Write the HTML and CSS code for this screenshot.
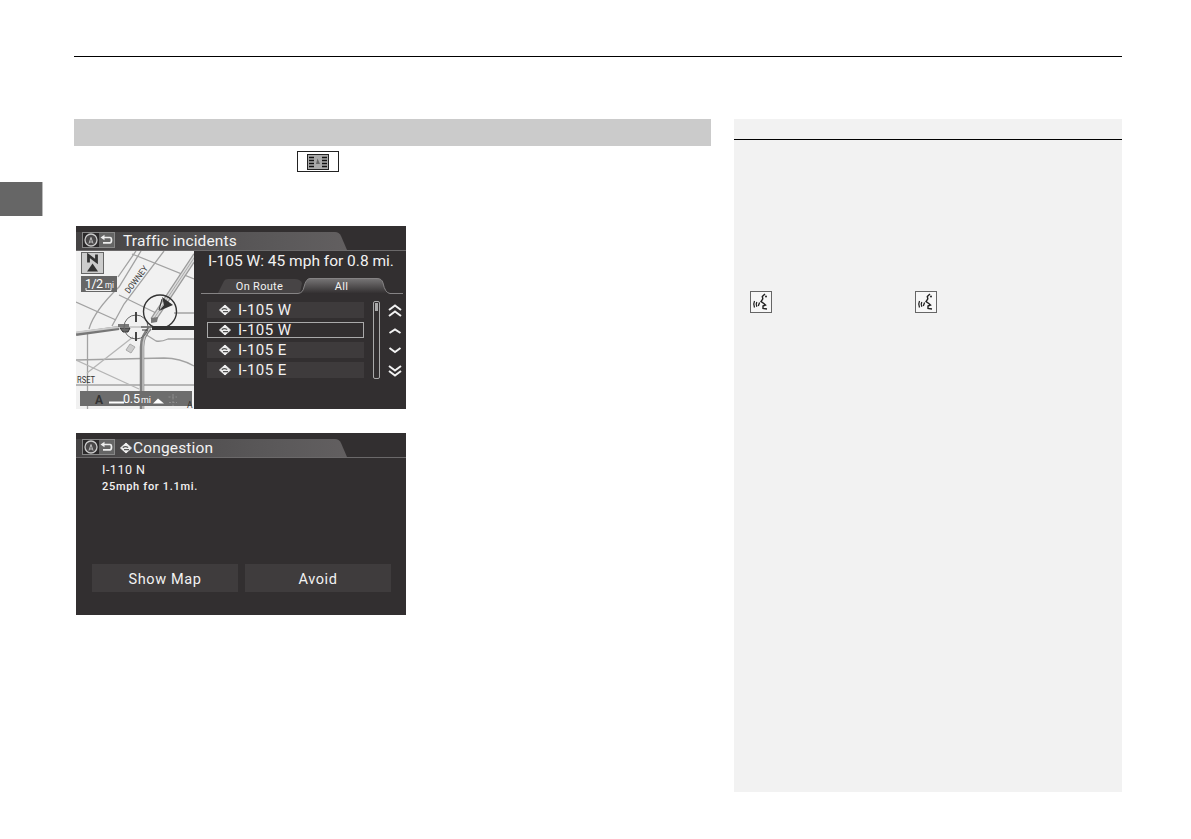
FILE: index.html
```html
<!DOCTYPE html>
<html lang="en">
<head>
    <meta charset="UTF-8">
    <meta name="viewport" content="width=device-width, initial-scale=1.0">
    <title>Traffic incidents</title>
    <link rel="stylesheet" href="styles.css">
</head>
<body>
    <!-- shared icons -->
    <svg class="defs" width="0" height="0">
        <symbol id="back" viewBox="0 0 33 16">
            <rect x="0.5" y="0.5" width="32" height="15" fill="#656565" stroke="#888"/>
            <rect x="1" y="1" width="16" height="14" fill="#2b292a"/>
            <circle cx="9" cy="8" r="6" fill="#4a4849" stroke="#ccc" stroke-width="1.3"/>
            <path d="M9 5.5 L7 11.5 M9 5.5 L11 11.5 M8 10 H10" stroke="#ccc" stroke-width="0.9" fill="none"/>
            <path d="M21 5.5 H28 Q29.500 5.500 29.500 8 Q29.500 10.800 28 10.800 H21" stroke="#eee" stroke-width="1.7" fill="none"/>
            <path d="M22.500 2.800 L18.500 5.500 L22.500 8.200 Z" fill="#eee"/>
        </symbol>
        <symbol id="sign" viewBox="0 0 12 12">
            <path d="M6 1 L11.500 6 L6 11 L0.500 6 Z" fill="#eee" stroke="#eee" stroke-linejoin="round"/>
            <path d="M2.800 5.800 Q5 3.800 8.200 5.500 M4 7.600 H9" stroke="#555" stroke-width="1.2" fill="none"/>
        </symbol>
        <symbol id="talk" viewBox="0 0 22 22">
            <rect x="0.5" y="0.5" width="21" height="21" fill="#f7f7f7" stroke="#666"/>
            <path d="M15 3 L12.300 5.500 L12.800 7.800 L11 10.500 L13.800 12.500 L15.500 14 L13 15 V17.500 L17 18" fill="none" stroke="#222" stroke-width="1.4"/>
            <circle cx="16" cy="5.500" r="1" fill="#222"/>
            <path d="M4.500 10 Q3 13 4.500 16.500 M6.800 11 Q5.600 13 6.800 15.800 M9.600 11.500 L8.300 15" fill="none" stroke="#222" stroke-width="1.3"/>
        </symbol>
    </svg>

    <div class="rail"><div class="rail-tab"></div></div>
    <div class="page">
        <header class="page-head"></header>
        <div class="columns">
            <main class="content">
                <div class="section-bar"></div>
                <div class="key-line">
                    <svg class="key" viewBox="0 0 42 21">
                        <rect x="0.5" y="0.5" width="41" height="20" fill="#fff" stroke="#222"/>
                        <rect x="10.5" y="3.5" width="21" height="15" fill="#aaa" stroke="#222"/>
                        <path d="M12 6.5 H17 M12 9.5 H17 M12 12.5 H17 M12 15.5 H17 M25 6.5 H30 M25 9.5 H30 M25 12.5 H30 M25 15.5 H30" stroke="#111" stroke-width="1.3"/>
                        <path d="M19 13 L20.500 7.500 L23 13 Z" fill="#666"/>
                    </svg>
                </div>

                <section class="screen">
                    <div class="title-bar">
                        <svg class="title-bg" viewBox="0 0 330 25">
                            <defs>
                                <linearGradient id="bar" x1="0" x2="1">
                                    <stop offset="0" stop-color="#454344"/>
                                    <stop offset="0.75" stop-color="#5b595a"/>
                                    <stop offset="1" stop-color="#625f60"/>
                                </linearGradient>
                            </defs>
                            <path d="M0 6 H259 Q263 6 265 10 L271 24 H0 Z" fill="url(#bar)"/>
                            <path d="M0 24.500 H330" stroke="#6b696a"/>
                        </svg>
                        <svg class="back"><use href="#back"/></svg>
                        <h1 class="title">Traffic incidents</h1>
                    </div>
                    <div class="screen-body">
                        <svg class="map" viewBox="0 0 118 158">
                            <rect width="118" height="158" fill="#f1f1f1"/>
                            <g fill="none" stroke="#a2a2a2" stroke-width="1.3">
                                <path d="M56 3 L118 28 M0 51 L40 69 M43 44 L80 62"/>
                                <path d="M65 0 L43 36 Q18 60 13 78 M60 0 L42 26"/>
                                <path d="M88 0 L48 53 L36 75"/>
                                <path d="M0 109 L88 107 Q104 107 118 115 M0 134 H118"/>
                                <path d="M69 83 L80 90 Q85 91 92 88 H118 M98 62 H118"/>
                                <path d="M11.500 82 V158"/>
                                <path d="M57 86 L11 122 M0 109 L63 138" stroke="#b5b5b5"/>
                            </g>
                            <g fill="none">
                                <path d="M120 4 L77 69" stroke="#999" stroke-width="6"/>
                                <path d="M120 4 L77 69" stroke="#dcdcdc" stroke-width="3.500"/>
                                <path d="M120 4 L77 69" stroke="#aaa" stroke-width="1"/>
                                <path d="M74 77 Q66 85 66 96 V158" stroke="#808080" stroke-width="4.500"/>
                                <path d="M74 77 Q67 85 67 96 V158" stroke="#c4c4c4" stroke-width="1.500"/>
                                <path d="M0 83 L43 77" stroke="#777" stroke-width="4"/>
                                <path d="M0 81.500 L43 76 H76" stroke="#ccc" stroke-width="2"/>
                                <path d="M76 77 H118" stroke="#333" stroke-width="4"/>
                            </g>
                            <path d="M42 73 H53 V76 H42 Z M75 67 L82 66 L81 71 L75 72 Z" fill="#777"/>
                            <path d="M44 77 H54 L52 81 H47 Z M65 76 H76 M66 79 H72" fill="#666" stroke="#333"/>
                            <path d="M54 93 L59 96 L55 102 L50 99 Z" fill="#ccc" stroke="#aaa"/>
                            <circle cx="60" cy="76" r="12" fill="none" stroke="#666"/>
                            <path d="M60 61 V71 M60 81 V90" stroke="#333" stroke-width="1.8"/>
                            <circle cx="84" cy="60.500" r="16.500" fill="none" stroke="#333" stroke-width="1.4"/>
                            <path d="M86 46 L97 54 L83 60 L88 54 Z" fill="#333"/>
                            <path d="M86 48 L83 59" stroke="#333"/>
                            <text class="street" transform="translate(53 43) rotate(-53)" textLength="32" lengthAdjust="spacingAndGlyphs">DOWNEY</text>
                            <text class="street" x="1" y="132" textLength="18" lengthAdjust="spacingAndGlyphs">RSET</text>
                            <rect x="5.500" y="1.500" width="22" height="21" fill="#ccc" stroke="#666"/>
                            <path d="M12.500 11.500 V4.500 L20.500 10.500 V3.500" fill="none" stroke="#333" stroke-width="2.800"/>
                            <path d="M16.500 12.500 L22 20.500 H11 Z" fill="#333"/>
                            <rect x="5" y="25" width="36" height="16" fill="#666"/>
                            <text class="scale" x="9" y="36.500" textLength="18">1/2</text>
                            <text class="unit" x="29" y="36.500" textLength="9" lengthAdjust="spacingAndGlyphs">mi</text>
                            <path d="M10 37 V39.500 H35 V37" fill="none" stroke="#eee"/>
                            <rect x="4" y="140" width="112" height="15" fill="#6d6d6d"/>
                            <text class="marker" x="19" y="152.500">A</text>
                            <path d="M33 151.500 H48" stroke="#fff" stroke-width="2"/>
                            <text class="scale" x="47" y="151.500" textLength="17">0.5</text>
                            <text class="unit" x="65" y="152" textLength="10" lengthAdjust="spacingAndGlyphs">mi</text>
                            <path d="M77 152.500 L82 147.500 L88 152.500 Z" fill="#fff"/>
                            <path d="M97 143 V155 M92.500 146 H101 M93 151.500 H101" stroke="#8d8d8d" stroke-dasharray="2 1.500"/>
                            <text class="street" x="111" y="157">A</text>
                        </svg>
                        <div class="incidents">
                            <p class="summary">I-105 W: 45 mph for 0.8 mi.</p>
                            <div class="tabs">
                                <svg class="tabs-bg" viewBox="0 0 202 18">
                                    <defs>
                                        <linearGradient id="tab" x1="0" x2="0" y1="0" y2="1">
                                            <stop offset="0" stop-color="#777576"/>
                                            <stop offset="1" stop-color="#343132"/>
                                        </linearGradient>
                                    </defs>
                                    <path d="M17 16 L23 4 Q24 2 27 2 H94 Q99 2 101 6 L99 16 Z" fill="#474445"/>
                                    <path d="M99 16 Q102 15 103 10 Q105 1.500 109 1.500 H176 Q181 1.500 182 6 Q184 15 188 16 Z" fill="url(#tab)"/>
                                    <path d="M0 16.500 H97 Q102 16 103 10 Q105 1.500 109 1.500 H176 Q181 1.500 182 6 Q184 16 189 16.500 H202" fill="none" stroke="#858384"/>
                                </svg>
                                <span class="tab">On Route</span>
                                <span class="tab">All</span>
                            </div>
                            <div class="list">
                                <ul class="rows">
                                    <li><svg class="sign"><use href="#sign"/></svg>I-105 W</li>
                                    <li class="selected"><svg class="sign"><use href="#sign"/></svg>I-105 W</li>
                                    <li><svg class="sign"><use href="#sign"/></svg>I-105 E</li>
                                    <li><svg class="sign"><use href="#sign"/></svg>I-105 E</li>
                                </ul>
                                <div class="scrollbar"><div class="thumb"></div></div>
                                <svg class="arrows" viewBox="0 0 14 80">
                                    <path d="M1 9 L7 4.500 L13 9 M1 15 L7 10.500 L13 15 M1.500 32 L7 28.500 L12.500 32 M1.500 47 L7 51 L12.500 47 M1 65 L7 69.500 L13 65 M1 70 L7 74.500 L13 70" fill="none" stroke="#f2f2f2" stroke-width="2"/>
                                </svg>
                            </div>
                        </div>
                    </div>
                </section>

                <section class="screen detail">
                    <div class="title-bar">
                        <svg class="title-bg" viewBox="0 0 330 25">
                            <path d="M0 6 H259 Q263 6 265 10 L271 24 H0 Z" fill="url(#bar)"/>
                            <path d="M0 24.500 H330" stroke="#6b696a"/>
                        </svg>
                        <svg class="back"><use href="#back"/></svg>
                        <svg class="title-sign"><use href="#sign"/></svg>
                        <h1 class="title">Congestion</h1>
                    </div>
                    <p class="road">I-110 N</p>
                    <p class="speed">25mph for 1.1mi.</p>
                    <div class="buttons">
                        <button type="button">Show Map</button>
                        <button type="button" class="avoid">Avoid</button>
                    </div>
                </section>
            </main>
            <aside class="notes">
                <div class="notes-head"></div>
                <div class="voice">
                    <svg class="talk"><use href="#talk"/></svg>
                    <svg class="talk"><use href="#talk"/></svg>
                </div>
            </aside>
        </div>
    </div>
</body>
</html>
```
FILE: styles.css
```css
* {
    box-sizing: border-box;
}
body {
    display: flex;
    height: 839px;
    margin: 0;
    overflow: hidden;
    background: #fff;
    font-family: Roboto, Arial, sans-serif;
}
svg {
    display: block;
    flex: none;
}
h1, p, ul {
    margin: 0;
    padding: 0;
    font-weight: 400;
}
.defs {
    position: absolute;
}
.rail {
    width: 74px;
    padding-top: 182px;
}
.rail-tab {
    width: 43px;
    height: 34px;
    background: #666;
    border-right: 1px solid #bbb;
}
.page {
    width: 1048px;
}
.page-head {
    height: 57px;
    border-bottom: 1px solid #000;
}
.columns {
    display: grid;
    grid-template-columns: 637px 388px;
    gap: 23px;
    margin-top: 62px;
}
.section-bar {
    height: 27px;
    background: #cbcbcb;
}
.key-line {
    height: 80px;
    padding: 5px 0 0 223px;
}
.key {
    width: 42px;
    height: 21px;
}

/* navigation screens */
.screen {
    width: 330px;
    height: 183px;
    margin-left: 2px;
    background: #322f30;
    color: #f2f2f2;
    overflow: hidden;
}
.title-bar {
    display: grid;
    grid-template-columns: 6px 33px auto 1fr;
    height: 25px;
    align-items: center;
}
.title-bar > * {
    grid-row: 1;
}
.title-bg {
    grid-column: 1 / -1;
    width: 330px;
    height: 25px;
}
.back {
    grid-column: 2;
    width: 33px;
    height: 16px;
    margin-top: 3px;
}
.title {
    grid-column: 4;
    margin: 4px 0 0 8px;
    font-size: 15.5px;
    line-height: 18px;
    letter-spacing: 0.15px;
}
.screen-body {
    display: flex;
}
.map {
    width: 118px;
    height: 158px;
}
.street {
    font-size: 8.5px;
    fill: #333;
}
.scale {
    font-size: 12.5px;
    fill: #fff;
}
.unit {
    font-size: 9px;
    fill: #fff;
}
.marker {
    font-size: 12px;
    font-weight: 700;
    fill: #333;
}
.incidents {
    width: 212px;
}
.summary {
    padding: 1px 0 0 14px;
    height: 26px;
    font-size: 15.5px;
    line-height: 18px;
    white-space: nowrap;
}
.tabs {
    display: grid;
    grid-template-columns: 96px 86px 20px;
    width: 202px;
    height: 18px;
    margin-left: 7px;
}
.tabs > * {
    grid-row: 1;
}
.tabs-bg {
    grid-column: 1 / -1;
    width: 202px;
    height: 18px;
}
.tab {
    padding-left: 21px;
    font-size: 11px;
    line-height: 20px;
    letter-spacing: 0.3px;
    text-align: center;
    grid-column: 1;
}
.tab + .tab {
    grid-column: 2;
    padding-left: 3px;
}
.list {
    display: flex;
    align-items: flex-start;
    margin: 6px 0 0 13px;
}
.rows {
    display: grid;
    gap: 4px;
    width: 157px;
    margin-top: 1px;
    list-style: none;
}
.rows li {
    display: flex;
    align-items: center;
    height: 16px;
    padding-left: 12px;
    background: #3e3b3c;
    font-size: 15px;
    letter-spacing: 0.4px;
}
.rows .selected {
    outline: 1px solid #aaa;
    outline-offset: -1px;
    background: #322f30;
}
.sign {
    width: 12px;
    height: 12px;
    margin-right: 7px;
}
.scrollbar {
    width: 7px;
    height: 78px;
    margin-left: 9px;
    padding: 1px;
    border: 1px solid #aaa;
    border-radius: 2px;
}
.thumb {
    width: 3px;
    height: 8px;
    background: #aaa;
}
.arrows {
    width: 14px;
    height: 80px;
    margin-left: 8px;
}
.detail {
    height: 182px;
    margin-top: 24px;
}
.title-sign {
    grid-column: 3;
    width: 12px;
    height: 12px;
    margin: 4px 0 0 5px;
}
.title-sign + .title {
    margin-left: 1px;
}
.road {
    padding: 4px 0 0 26px;
    font-size: 12.5px;
    line-height: 16px;
    letter-spacing: 0.5px;
}
.speed {
    padding: 1px 0 0 26px;
    font-size: 11px;
    font-weight: 500;
    line-height: 16px;
    letter-spacing: 0.7px;
}
.buttons {
    display: flex;
    gap: 7px;
    margin: 69px 0 0 16px;
}
.buttons button {
    width: 146px;
    height: 28px;
    padding: 2px 0 0;
    border: 0;
    background: #3f3c3d;
    color: #f2f2f2;
    font-family: inherit;
    font-size: 14.5px;
    letter-spacing: 0.6px;
}

/* side notes */
.notes {
    height: 673px;
    background: #f2f2f2;
}
.notes-head {
    height: 21px;
    border-bottom: 1px solid #000;
}
.voice {
    display: flex;
    gap: 143px;
    padding: 151px 0 0 16px;
}
.talk {
    width: 22px;
    height: 22px;
}
```
